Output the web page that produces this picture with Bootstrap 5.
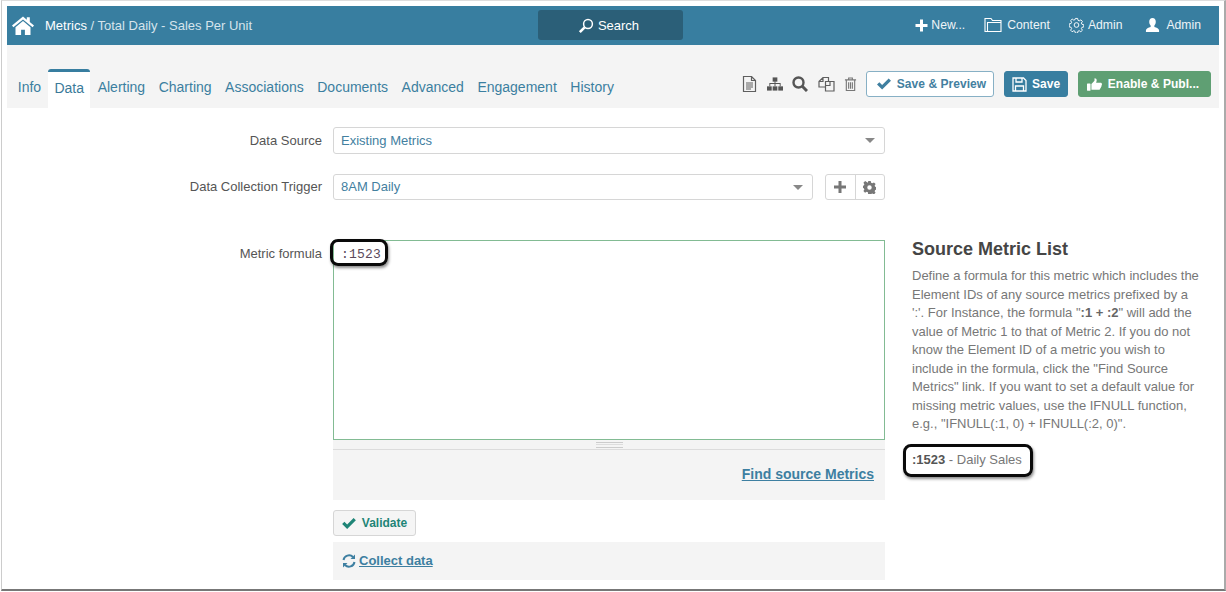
<!DOCTYPE html>
<html lang="en">
<head>
<meta charset="utf-8">
<title>Metrics</title>
<link href="https://cdn.jsdelivr.net/npm/bootstrap@5.3.0/dist/css/bootstrap.min.css" rel="stylesheet">
<style>
html,body{height:100%;}
body{margin:0;background:#fff;font-family:"Liberation Sans",Arial,sans-serif;font-size:13px;color:#555;overflow:hidden;}
.frame{width:1225px;height:591px;margin-left:1px;border-top:1px solid #ddd;border-left:1px solid #ccc;border-right:2px solid #aaa;border-bottom:2px solid #777;padding:5px 5px 0 5px;overflow:hidden;}
.topbar{height:39px;background:#387ea0;color:#fff;padding:0 18px 0 4px;}
.crumb{font-size:13px;color:#d5e4ec;margin-left:10px;}
.crumb b{font-weight:400;color:#fff;}
.searchbtn{position:absolute;left:531px;top:4px;width:145px;height:30px;background:#2b5f78;border-radius:3px;color:#fff;font-size:13px;padding-right:4px;padding-top:1px;}
.topnav{gap:19px;}
.topitem{color:#eef4f7;font-size:12.2px;gap:3px;}
.tabbar{height:63px;background:#f4f4f4;padding:0 8px 0 4px;}
.tabitem{display:block;font-size:14px;color:#3b7fa0;padding:0 6.77px;height:39px;line-height:37px;text-decoration:none;margin-top:1px;}
.tabitem.on{background:#fff;border-top:3px solid #387ea0;border-radius:3px 3px 0 0;line-height:33px;color:#3a7a99;width:42px;padding:0 6px 0 6.5px;margin-right:1px;}
.ibtns{gap:9.5px;margin-right:9px;}
.actbtn{height:26px;font-size:12px;font-weight:700;border-radius:3px;padding:0;gap:5px;justify-content:center;display:flex;align-items:center;letter-spacing:.05px;}
.preview{width:128px;background:#fff;border:1px solid #87b0c5;color:#43809f;margin-right:10px;padding-left:3px;gap:6px;}
.savebt{width:64px;background:#387ea0;border:1px solid #387ea0;color:#fff;margin-right:10px;}
.pub{width:133px;background:#5f9f73;border:1px solid #5f9f73;color:#fff;gap:6px;padding-right:3px;}
.bodyarea{position:relative;padding-top:19px;}
.lbl{width:315px;text-align:right;color:#555;margin-right:11px;flex:none;}
.selbox{height:27px;border:1px solid #d6d6d6;border-radius:3px;background:#fff;color:#43809f;padding:0 7px;font-size:13px;}
.caret{width:0;height:0;border-left:5px solid transparent;border-right:5px solid transparent;border-top:5px solid #888;margin-right:2px;}
.w552{width:552px;}
.w480{width:480px;height:26px;}
.gbtn{width:60px;height:26px;border:1px solid #d6d6d6;border-radius:3px;margin-left:12px;background:#fff;}
.gbtn span{flex:1;display:flex;align-items:center;justify-content:center;}
.gbtn span+span{border-left:1px solid #d6d6d6;}
.editor{width:552px;height:200px;border:1px solid #82bb93;background:#fff;}
.code{display:block;font-family:"Liberation Mono",monospace;font-size:13px;color:#5b4a5a;padding:7px 0 0 7px;line-height:14px;letter-spacing:.2px;}
.grip{height:10px;background:#f4f4f4;border-bottom:1px solid #dcdcdc;}
.gripln{width:27px;height:6px;border-top:1px solid #ccc;border-bottom:1px solid #ccc;position:relative;}
.gripln::after{content:"";position:absolute;left:0;right:0;top:1px;border-top:1px solid #ddd;}
.findbar{height:50px;background:#f4f4f4;padding:0 11px 2px 0;}
.findbar a,.collect a{color:#3d7fa1;font-weight:700;font-size:14px;}
.valbtn{width:83px;height:26px;margin-top:10px;background:#f5f5f5;border:1px solid #d6d6d6;border-radius:3px;color:#1f8577;font-weight:700;font-size:12px;gap:6px;}
.collect{height:38px;margin-top:6px;background:#f4f4f4;padding-left:9px;gap:3px;}
.collect a{font-size:13px;}
.side{width:295px;margin-left:27px;margin-top:-1px;flex:none;}
.sidetitle{font-size:18px;font-weight:700;color:#454545;line-height:21px;margin:0 0 7px;}
.sidetext{font-size:13px;line-height:18.5px;color:#777;margin:0 0 18px;white-space:nowrap;}
.sidetext b{color:#666;}
.srcline{font-size:13px;color:#777;line-height:16px;margin:0;}
.srcline b{color:#555;}
.callout{position:absolute;border:3px solid #0a0a0a;border-radius:8px;box-shadow:1px 2px 3px rgba(0,0,0,.45);pointer-events:none;}
.call1{left:323px;top:131px;width:58px;height:27px;}
.call2{left:896px;top:336px;width:130px;height:33px;}
</style>
</head>
<body>
<div class="frame">
  <div class="topbar d-flex align-items-center position-relative">
    <svg width="24" height="21" viewBox="0 0 24 21" fill="#fff"><path d="M12 1.5 1 10.600l1.400 1.700L12 4.400l9.600 7.900 1.400-1.700-4.200-3.500V2.200h-3v2.600z"/><path d="M12 6 4.500 12.200V20h5.600v-5.300h3.800V20h5.600v-7.800z"/></svg>
    <div class="crumb"><b>Metrics</b> / Total Daily - Sales Per Unit</div>
    <div class="searchbtn d-flex align-items-center justify-content-center">
      <svg class="me-1" width="16" height="16" viewBox="0 0 16 16" fill="none" stroke="#fff"><circle cx="10" cy="6" r="4.400" stroke-width="1.500"/><path d="M6.600 9.400 1.800 14.200" stroke-width="2.600"/></svg>Search
    </div>
    <div class="topnav d-flex align-items-center ms-auto">
      <div class="topitem d-flex align-items-center">
        <svg width="13" height="13" viewBox="0 0 13 13" fill="#fff"><path d="M5 .5h3V5h4.500v3H8v4.500H5V8H.5V5H5z"/></svg>New...
      </div>
      <div class="topitem d-flex align-items-center" style="gap:5px">
        <svg width="18" height="16" viewBox="0 0 18 16" fill="none" stroke="#fff" stroke-width="1.100"><path d="M1 14.500V1.500h6L8.500 3.500H17v11z"/><path d="M3.500 14.500V5.500H17"/></svg>Content
      </div>
      <div class="topitem d-flex align-items-center" style="gap:4px">
        <svg width="15" height="16" viewBox="0 0 16 16" fill="none" stroke="#fff"><circle cx="8" cy="8" r="2.500"/><path d="M6.800 1h2.400l.4 2 1.300.6 1.800-1.100 1.600 1.700-1.100 1.700.6 1.400 2 .4v2.400l-2 .4-.6 1.300 1.100 1.800-1.700 1.600-1.700-1.100-1.400.6-.4 2H6.800l-.4-2-1.300-.6-1.800 1.100-1.600-1.700 1.100-1.700-.6-1.400-2-.4V6.800l2-.4.600-1.300-1.100-1.800 1.700-1.600 1.700 1.100 1.400-.6z"/></svg>Admin
      </div>
      <div class="topitem d-flex align-items-center" style="gap:6px;margin-left:4px">
        <svg width="15" height="16" viewBox="0 0 16 16" fill="#fff"><path d="M8 .5c2.200 0 3.500 1.700 3.500 4 0 1.700-.7 3.200-1.500 4v1.500c2.400.9 5 1.600 5 3.500v2H1v-2c0-1.900 2.600-2.600 5-3.500V8.500c-.8-.8-1.500-2.300-1.500-4 0-2.300 1.300-4 3.500-4z"/></svg>Admin
      </div>
    </div>
  </div>

  <div class="tabbar d-flex align-items-end position-relative">
    <div class="d-flex align-items-end">
      <a class="tabitem" href="#">Info</a>
      <a class="tabitem on" href="#">Data</a>
      <a class="tabitem" href="#">Alerting</a>
      <a class="tabitem" href="#">Charting</a>
      <a class="tabitem" href="#">Associations</a>
      <a class="tabitem" href="#">Documents</a>
      <a class="tabitem" href="#">Advanced</a>
      <a class="tabitem" href="#">Engagement</a>
      <a class="tabitem" href="#">History</a>
    </div>
    <div class="d-flex align-items-center ms-auto" style="margin-bottom:11px">
      <div class="ibtns d-flex align-items-center">
        <svg width="15" height="16" viewBox="0 0 15 16" fill="none" stroke="#5f5f5f"><path d="M1.500.5h8l4 4v11h-12zM9.500.5v4h4" stroke-width="1.200"/><path d="M4 7h7M4 9h7M4 11h7M4 13h5" stroke-width="1"/></svg>
        <svg width="16" height="14" viewBox="0 0 17 14" fill="#555"><rect x="6" y="0" width="5" height="4.500"/><rect x="0" y="9.500" width="5" height="4.500"/><rect x="6" y="9.500" width="5" height="4.500"/><rect x="12" y="9.500" width="5" height="4.500"/><path d="M8 4h1v2h5.500v3.500h-1V7H9v2.500H8V7H3.500v2.500h-1V6H8z"/></svg>
        <svg width="16" height="16" viewBox="0 0 16 16" fill="none" stroke="#555"><circle cx="6.500" cy="6.500" r="5" stroke-width="2.400"/><path d="M10.300 10.300 15 15" stroke-width="3"/></svg>
        <svg width="17" height="16" viewBox="0 0 17 16" fill="none" stroke="#5f5f5f" stroke-width="1.200"><path d="M1 5.500 5 1.500h5.500V11H1zM5 1.500v4H1"/><path d="M7.500 5.500h4l4.500 0V15H7.500z" fill="#f4f4f4"/><path d="M12 5.500v4H7.500"/></svg>
        <svg width="13" height="16" viewBox="0 0 14 16" fill="none" stroke="#777" stroke-width="1.200"><path d="M1 3.500h12M5 3.500V1.500h4v2M2.500 3.500v11.500h9V3.500"/><path d="M5 6v7M7 6v7M9 6v7"/></svg>
      </div>
      <div class="actbtn preview">
        <svg width="14" height="12" viewBox="0 0 15 12" fill="#3f7fa0"><path d="M0 6.500 2.500 4 5.500 7 12.500 0 15 2.500 5.500 12z"/></svg>Save &amp; Preview
      </div>
      <div class="actbtn savebt">
        <svg width="15" height="15" viewBox="0 0 15 15" fill="none" stroke="#fff" stroke-width="1.300"><path d="M1 1h10.500L14 3.500V14H1z"/><path d="M4 1v4h6V1M3.500 14V9h8v5"/></svg>Save
      </div>
      <div class="actbtn pub">
        <svg width="15" height="15" viewBox="0 0 17 16" fill="#fff"><rect x="0" y="7" width="4" height="8" rx=".5"/><path d="M5 7.500 8.500 3.800V.8c1.600 0 2.500 1 2.500 2.400 0 1-.4 1.800-.7 2.800h5c.9 0 1.700.7 1.700 1.600 0 .5-.2.900-.5 1.200.2.900-.1 1.600-.7 2 .1.900-.3 1.500-.9 1.800 0 1-.7 1.400-1.500 1.400H8.500L5 14z"/></svg>Enable &amp; Publ...
      </div>
    </div>
  </div>

  <div class="bodyarea d-flex">
    <div class="d-flex flex-column">
      <div class="d-flex align-items-center" style="margin-bottom:20px">
        <div class="lbl">Data Source</div>
        <div class="selbox w552 d-flex align-items-center justify-content-between"><span>Existing Metrics</span><i class="caret"></i></div>
      </div>
      <div class="d-flex align-items-center" style="margin-bottom:40px">
        <div class="lbl">Data Collection Trigger</div>
        <div class="selbox w480 d-flex align-items-center justify-content-between"><span>8AM Daily</span><i class="caret"></i></div>
        <div class="gbtn d-flex">
          <span><svg width="12" height="12" viewBox="0 0 12 12" fill="#777"><path d="M4.500 0h3v4.500H12v3H7.500V12h-3V7.500H0v-3h4.500z"/></svg></span>
          <span><svg width="13" height="13" viewBox="0 0 16 16" fill="#777"><path fill-rule="evenodd" d="M6.500 0h3l.5 2.200 1.500.7 2-1.200 2 2.100-1.200 1.900.7 1.500 2 .4v2.900l-2 .5-.7 1.500 1.200 2-2.100 2-1.900-1.200-1.500.6-.5 2.100h-3L6 13.900l-1.500-.6-2 1.200-2-2.100 1.200-2L1 8.900-1 8.500V6l2-.4.700-1.500-1.200-2 2.100-2 1.900 1.200L6 2.200zM8 5.200a2.700 2.700 0 1 0 0 5.500 2.700 2.700 0 0 0 0-5.500z"/></svg></span>
        </div>
      </div>
      <div class="d-flex align-items-start">
        <div class="lbl" style="padding-top:4px">Metric formula</div>
        <div class="d-flex flex-column">
          <div class="editor"><code class="code">:1523</code></div>
          <div class="grip d-flex justify-content-center align-items-center"><div class="gripln"></div></div>
          <div class="findbar d-flex align-items-center justify-content-end"><a href="#">Find source Metrics</a></div>
          <div class="valbtn d-flex align-items-center justify-content-center">
            <svg width="14" height="11" viewBox="0 0 15 12" fill="#1f8577"><path d="M0 6.500 2.500 4 5.500 7 12.500 0 15 2.500 5.500 12z"/></svg>Validate
          </div>
          <div class="collect d-flex align-items-center">
            <svg width="14" height="14" viewBox="0 0 14 14" fill="none" stroke="#3d7fa1" stroke-width="2"><path d="M1.500 6A5.600 5.600 0 0 1 11 3"/><path d="M12.500 8A5.600 5.600 0 0 1 3 11"/><path d="M13 .5V5H8.500z" fill="#3d7fa1" stroke="none"/><path d="M1 13.500V9h4.500z" fill="#3d7fa1" stroke="none"/></svg>
            <a href="#">Collect data</a>
          </div>
        </div>
        <div class="side">
          <h5 class="sidetitle">Source Metric List</h5>
          <p class="sidetext">Define a formula for this metric which includes the<br>Element IDs of any source metrics prefixed by a<br>':'. For Instance, the formula "<b>:1 + :2</b>" will add the<br>value of Metric 1 to that of Metric 2. If you do not<br>know the Element ID of a metric you wish to<br>include in the formula, click the "Find Source<br>Metrics" link. If you want to set a default value for<br>missing metric values, use the IFNULL function,<br>e.g., "IFNULL(:1, 0) + IFNULL(:2, 0)".</p>
          <p class="srcline"><b>:1523</b> - Daily Sales</p>
        </div>
      </div>
    </div>
    <div class="callout call1"></div>
    <div class="callout call2"></div>
  </div>
</div>
<script src="https://cdn.jsdelivr.net/npm/bootstrap@5.3.0/dist/js/bootstrap.bundle.min.js"></script>
</body>
</html>
